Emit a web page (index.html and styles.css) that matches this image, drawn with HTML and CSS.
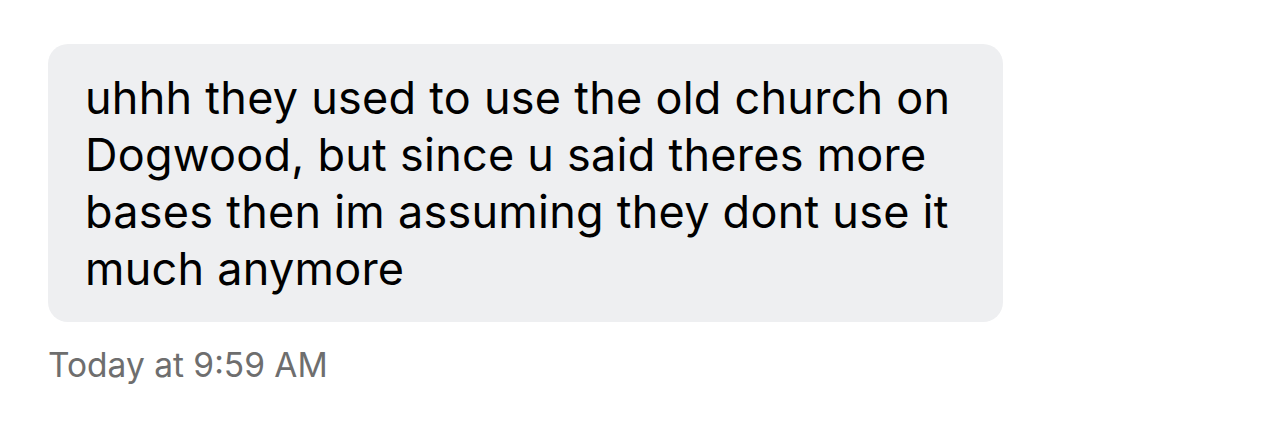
FILE: index.html
```html
<!DOCTYPE html>
<html lang="en">

<head>
    <meta charset="UTF-8">
    <meta name="viewport" content="width=device-width, initial-scale=1.0">
    <title>Message</title>
    <link rel="stylesheet" href="styles.css">
</head>

<body>
    <div class="thread">
        <div class="bubble">
            <p>uhhh they used to use the old church on Dogwood, but since u said theres more bases then im assuming they dont use it much anymore</p>
        </div>
        <div class="timestamp">Today at 9:59 AM</div>
    </div>
</body>

</html>
```

FILE: styles.css
```css
body {
    margin: 0;
    background-color: #ffffff;
    font-family: Inter, "Noto Sans", sans-serif;
}

.thread {
    padding: 44px 0 0 48px;
}

.bubble {
    width: 955px;
    box-sizing: border-box;
    background-color: #eeeff1;
    border-radius: 20px;
    padding: 25px 37px;
}

.bubble p {
    margin: 0;
    font-size: 45px;
    line-height: 57px;
    letter-spacing: 0.25px;
    color: #000000;
}

.timestamp {
    margin-top: 23px;
    font-size: 33.5px;
    color: #6e6e6e;
}
```
